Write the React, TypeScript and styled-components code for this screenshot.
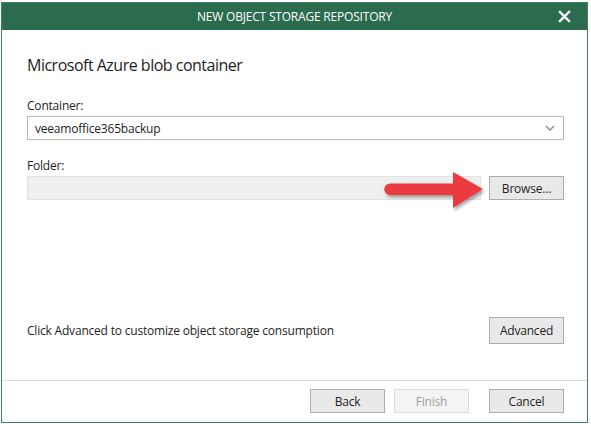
import React from 'react';
import styled, { createGlobalStyle } from 'styled-components';

const GlobalStyle = createGlobalStyle`
  html, body {
    margin: 0;
    padding: 0;
    background: #ffffff;
  }
  body {
    font-family: 'Open Sans', 'Noto Sans', sans-serif;
    color: #1e1e1e;
  }
`;

const Window = styled.div`
  box-sizing: border-box;
  margin: 2px 0 0 1px;
  width: 587px;
  height: 421px;
  border: 1px solid #3f8262;
  display: flex;
  flex-direction: column;
  background: #ffffff;
`;

const TitleBar = styled.div`
  height: 27px;
  background: #2b6b4e;
  color: #ffffff;
  display: flex;
  align-items: center;
  justify-content: center;
  position: relative;
  font-size: 12px;
  letter-spacing: -0.2px;
`;

const CloseButton = styled.div`
  position: absolute;
  right: 16px;
  top: 7px;
  width: 13px;
  height: 13px;
  display: flex;
`;

const Body = styled.div`
  flex: 1;
  display: flex;
  flex-direction: column;
  padding: 24px 23px 0 25px;
`;

const Heading = styled.div`
  font-size: 16px;
  letter-spacing: -0.5px;
  margin-bottom: 21px;
`;

const Label = styled.div`
  font-size: 12px;
  letter-spacing: -0.2px;
  margin-bottom: 2px;
`;

const Combo = styled.div`
  box-sizing: border-box;
  height: 24px;
  border: 1px solid #b9b9b9;
  display: flex;
  align-items: center;
  justify-content: space-between;
  padding: 0 8px 0 7px;
  font-size: 12px;
  letter-spacing: -0.2px;
  margin-bottom: 17px;
`;

const FieldRow = styled.div`
  display: flex;
  gap: 8px;
  position: relative;
`;

const ReadonlyField = styled.div`
  box-sizing: border-box;
  flex: 1;
  height: 24px;
  background: #efefef;
  border: 1px solid #e2e2e2;
`;

const Button = styled.div<{ $disabled?: boolean; $tall?: boolean }>`
  box-sizing: border-box;
  width: 75px;
  height: ${(p) => (p.$tall ? '27px' : '24px')};
  border: 1px solid ${(p) => (p.$disabled ? '#dcdcdc' : '#adadad')};
  background: ${(p) => (p.$disabled ? '#f4f4f4' : '#e9e9e9')};
  color: ${(p) => (p.$disabled ? '#a0a0a0' : '#1e1e1e')};
  display: flex;
  align-items: center;
  justify-content: center;
  font-size: 12px;
  letter-spacing: -0.2px;
`;

const ArrowMark = styled.svg`
  position: absolute;
  left: 356px;
  top: -7px;
  overflow: visible;
`;

const Spacer = styled.div`
  flex: 1;
`;

const AdvancedRow = styled.div`
  display: flex;
  align-items: center;
  justify-content: space-between;
  font-size: 12px;
  letter-spacing: -0.2px;
  margin-bottom: 36px;
`;

const Footer = styled.div`
  box-sizing: border-box;
  height: 42px;
  border-top: 1px solid #dedede;
  display: flex;
  align-items: flex-start;
  justify-content: flex-end;
  gap: 9px;
  padding: 8px 23px 0 0;
`;

const FooterGap = styled.div`
  width: 2px;
`;

export default function App() {
  return (
    <>
      <GlobalStyle />
      <Window>
        <TitleBar>
          NEW OBJECT STORAGE REPOSITORY
          <CloseButton>
            <svg width="13" height="13" viewBox="0 0 13 13">
              <path d="M2 2 L11 11 M11 2 L2 11" stroke="#ffffff" strokeWidth="2.4" strokeLinecap="square" />
            </svg>
          </CloseButton>
        </TitleBar>
        <Body>
          <Heading>Microsoft Azure blob container</Heading>
          <Label>Container:</Label>
          <Combo>
            <span>veeamoffice365backup</span>
            <svg width="10" height="6" viewBox="0 0 10 6">
              <path d="M1 1 L5 5 L9 1" fill="none" stroke="#8a8a8a" strokeWidth="1.3" />
            </svg>
          </Combo>
          <Label>Folder:</Label>
          <FieldRow>
            <ReadonlyField />
            <Button>Browse...</Button>
            <ArrowMark width="104" height="44" viewBox="0 0 104 44">
              <defs>
                <filter id="shadow" x="-20%" y="-30%" width="140%" height="170%">
                  <feDropShadow dx="1.5" dy="2.5" stdDeviation="1.6" floodColor="#000000" floodOpacity="0.35" />
                </filter>
              </defs>
              <g filter="url(#shadow)">
                <path
                  d="M7 14.5 L70 14.5 L70 3 L100 20 L70 39 L70 26 L7 26 A5.75 5.75 0 0 1 7 14.5 Z"
                  fill="#ec3b3f"
                />
              </g>
            </ArrowMark>
          </FieldRow>
          <Spacer />
          <AdvancedRow>
            <span>Click Advanced to customize object storage consumption</span>
            <Button $tall>Advanced</Button>
          </AdvancedRow>
        </Body>
        <Footer>
          <Button>Back</Button>
          <Button $disabled>Finish</Button>
          <FooterGap />
          <Button>Cancel</Button>
        </Footer>
      </Window>
    </>
  );
}
